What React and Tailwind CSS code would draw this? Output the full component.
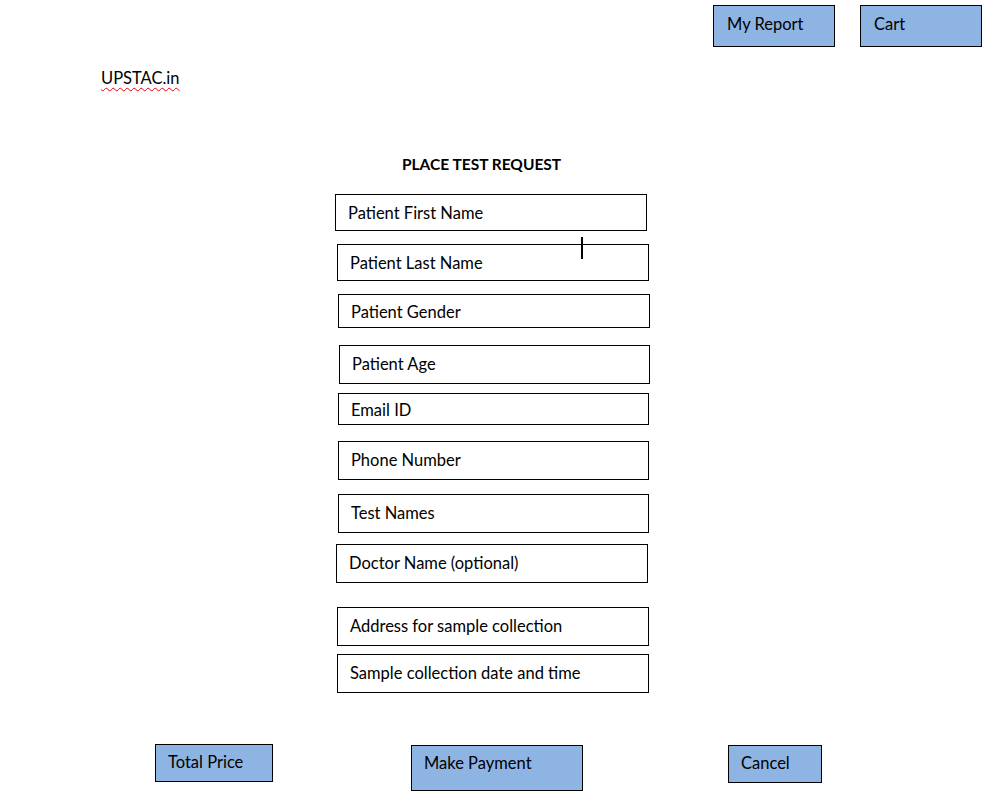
import React from "react";

const App = () => {
  return (
    <div className="relative w-[992px] h-[797px] bg-white text-black font-['Lato','Open_Sans',sans-serif] text-[16.5px]">
      {/* top nav */}
      <div className="flex justify-end pt-[5px] pr-[10px] gap-[25px]">
        <div className="w-[122px] h-[42px] border border-black bg-[#8eb4e3] pl-[13px] pt-[8px] leading-[20px]">
          My Report
        </div>
        <div className="w-[122px] h-[42px] border border-black bg-[#8eb4e3] pl-[13px] pt-[8px] leading-[20px]">
          Cart
        </div>
      </div>

      {/* logo */}
      <div className="ml-[101px] mt-[21px] h-[20px] leading-[20px]">
        <span className="underline decoration-wavy decoration-red-600 decoration-1 underline-offset-[3px]">
          UPSTAC.in
        </span>
      </div>

      {/* title */}
      <div className="mt-[66px] h-[20px] leading-[20px] text-center ml-[-29px] font-bold text-[15.5px]">
        PLACE TEST REQUEST
      </div>

      {/* form fields */}
      <div className="flex flex-col mt-[20px]">
        <div className="ml-[335px] w-[312px] h-[37px] border border-black flex items-center pl-[12px] pt-[2px]">
          Patient First Name
        </div>
        <div className="ml-[337px] mt-[13px] w-[312px] h-[37px] border border-black flex items-center pl-[12px] pt-[2px]">
          Patient Last Name
        </div>
        <div className="ml-[338px] mt-[13px] w-[312px] h-[34px] border border-black flex items-center pl-[12px] pt-[2px]">
          Patient Gender
        </div>
        <div className="ml-[339px] mt-[17px] w-[311px] h-[39px] border border-black flex items-center pl-[12px]">
          Patient Age
        </div>
        <div className="ml-[338px] mt-[9px] w-[311px] h-[32px] border border-black flex items-center pl-[12px] pt-[2px]">
          Email ID
        </div>
        <div className="ml-[338px] mt-[16px] w-[311px] h-[39px] border border-black flex items-center pl-[12px]">
          Phone Number
        </div>
        <div className="ml-[338px] mt-[14px] w-[311px] h-[39px] border border-black flex items-center pl-[12px]">
          Test Names
        </div>
        <div className="ml-[336px] mt-[11px] w-[312px] h-[39px] border border-black flex items-center pl-[12px]">
          Doctor Name (optional)
        </div>
        <div className="ml-[337px] mt-[24px] w-[312px] h-[39px] border border-black flex items-center pl-[12px]">
          Address for sample collection
        </div>
        <div className="ml-[337px] mt-[8px] w-[312px] h-[39px] border border-black flex items-center pl-[12px]">
          Sample collection date and time
        </div>
      </div>

      {/* bottom actions */}
      <div className="flex items-start mt-[51px]">
        <div className="ml-[155px] w-[118px] h-[38px] border border-black bg-[#8eb4e3] pl-[12px] pt-[7px] leading-[20px]">
          Total Price
        </div>
        <div className="ml-[138px] mt-[1px] w-[172px] h-[46px] border border-black bg-[#8eb4e3] pl-[12px] pt-[7px] leading-[20px]">
          Make Payment
        </div>
        <div className="ml-[145px] mt-[1px] w-[94px] h-[38px] border border-black bg-[#8eb4e3] pl-[12px] pt-[7px] leading-[20px]">
          Cancel
        </div>
      </div>

      {/* text cursor */}
      <div className="absolute left-[581px] top-[237px] w-[2px] h-[22px] bg-black" />
    </div>
  );
};

export default App;
